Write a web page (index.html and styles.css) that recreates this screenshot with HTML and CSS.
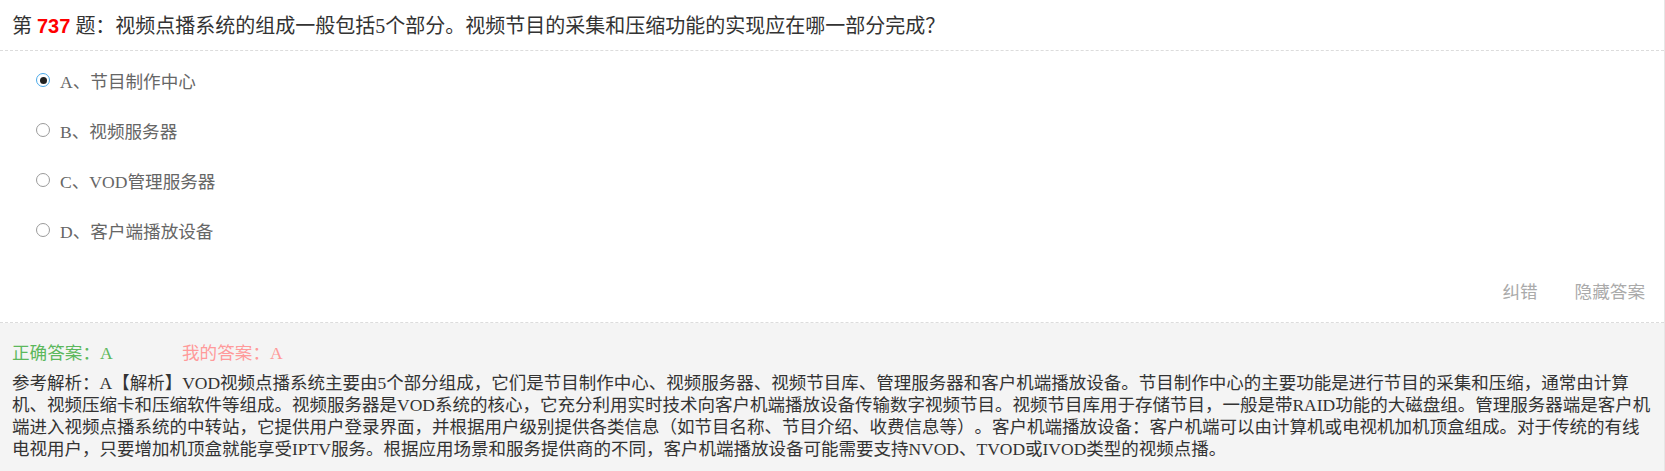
FILE: index.html
```html
<!DOCTYPE html>
<html lang="zh-CN">
<head>
<meta charset="utf-8">
<title>第737题</title>
<link rel="stylesheet" href="styles.css">
</head>
<body>
<div class="panel">
  <div class="question">第 <span class="qno">737</span> 题：视频点播系统的组成一般包括5个部分。视频节目的采集和压缩功能的实现应在哪一部分完成？</div>
  <ul class="options">
    <li class="option"><span class="radio checked"></span><span class="opt-text">A、节目制作中心</span></li>
    <li class="option"><span class="radio"></span><span class="opt-text">B、视频服务器</span></li>
    <li class="option"><span class="radio"></span><span class="opt-text">C、VOD管理服务器</span></li>
    <li class="option"><span class="radio"></span><span class="opt-text">D、客户端播放设备</span></li>
  </ul>
  <div class="actions">
    <span class="action">纠错</span>
    <span class="action">隐藏答案</span>
  </div>
  <div class="answer">
    <div class="answer-row">
      <span class="right-answer">正确答案：A</span>
      <span class="my-answer">我的答案：A</span>
    </div>
    <div class="analysis">参考解析：A【解析】VOD视频点播系统主要由5个部分组成，它们是节目制作中心、视频服务器、视频节目库、管理服务器和客户机端播放设备。节目制作中心的主要功能是进行节目的采集和压缩，通常由计算机、视频压缩卡和压缩软件等组成。视频服务器是VOD系统的核心，它充分利用实时技术向客户机端播放设备传输数字视频节目。视频节目库用于存储节目，一般是带RAID功能的大磁盘组。管理服务器端是客户机端进入视频点播系统的中转站，它提供用户登录界面，并根据用户级别提供各类信息（如节目名称、节目介绍、收费信息等）。客户机端播放设备：客户机端可以由计算机或电视机加机顶盒组成。对于传统的有线电视用户，只要增加机顶盒就能享受IPTV服务。根据应用场景和服务提供商的不同，客户机端播放设备可能需要支持NVOD、TVOD或IVOD类型的视频点播。</div>
  </div>
</div>
</body>
</html>
```

FILE: styles.css
```css
html, body {
  margin: 0;
  padding: 0;
  background: #ffffff;
}
body {
  font-family: "Liberation Serif", "Noto Sans CJK SC", serif;
  color: #333;
  text-spacing-trim: space-all;
}
.panel {
  width: 1664px;
  height: 471px;
  border-right: 1px solid #e6e6e6;
  display: flex;
  flex-direction: column;
}
.question {
  font-size: 20px;
  line-height: 28px;
  padding: 12px 12px 10px;
  border-bottom: 1px dashed #dcdcdc;
  color: #333;
}
.qno {
  font-family: "Liberation Sans", sans-serif;
  font-weight: bold;
  color: #ff0000;
}
.options {
  list-style: none;
  margin: 0;
  padding: 16px 0 0 36px;
  display: flex;
  flex-direction: column;
  gap: 24px;
}
.option {
  display: flex;
  align-items: center;
  gap: 10px;
  height: 26px;
  font-size: 17.6px;
  color: #666;
}
.radio {
  box-sizing: border-box;
  width: 14px;
  height: 14px;
  border: 1.5px solid #9a9a9a;
  border-radius: 50%;
  display: flex;
  align-items: center;
  justify-content: center;
  background: #fff;
}
.radio.checked {
  border-color: #4aa9e9;
}
.radio.checked::after {
  content: "";
  width: 7px;
  height: 7px;
  border-radius: 50%;
  background: #222;
}
.actions {
  display: flex;
  justify-content: flex-end;
  gap: 37px;
  padding: 36px 19px 17px 0;
  border-bottom: 1px dashed #dcdcdc;
  font-size: 17.6px;
  line-height: 26px;
  color: #aaa;
}
.answer {
  flex: 1;
  background: #f4f4f4;
  padding: 18px 11px 0 12px;
}
.answer-row {
  display: flex;
  font-size: 17.6px;
  line-height: 24px;
}
.right-answer {
  color: #5cb85c;
  width: 170px;
}
.my-answer {
  color: #ff9a9a;
}
.analysis {
  margin-top: 7px;
  font-size: 17.5px;
  line-height: 22px;
  color: #333;
}
```
